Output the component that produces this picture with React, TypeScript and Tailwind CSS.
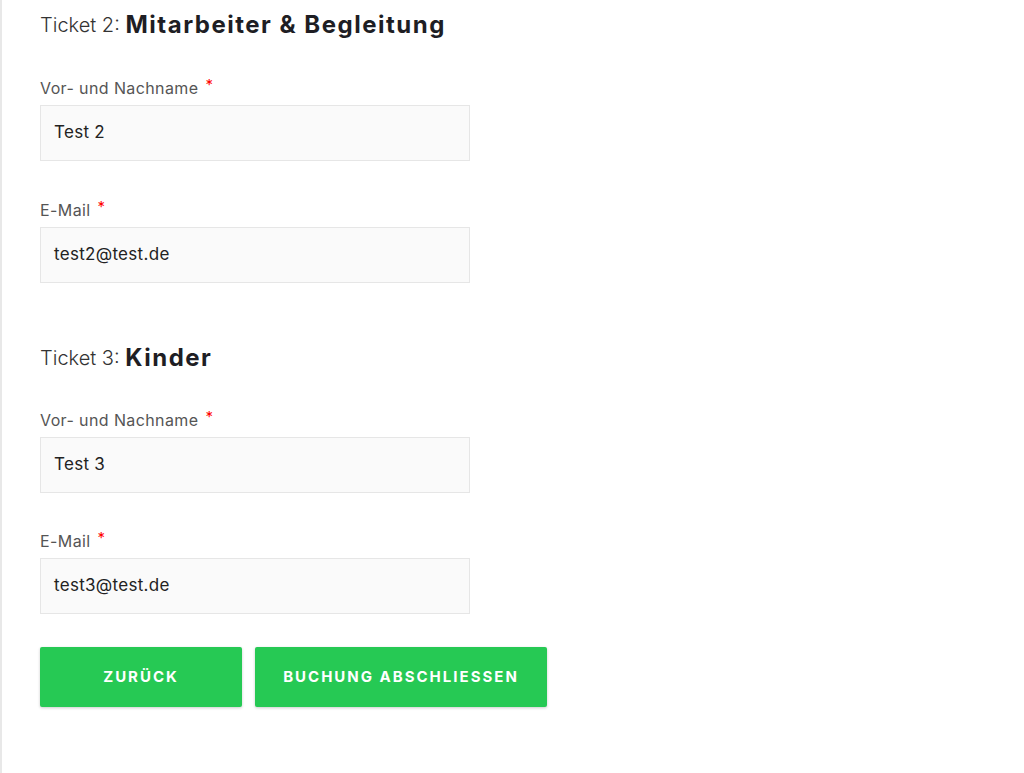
import React from "react";

const font = { fontFamily: "Inter, 'Noto Sans', sans-serif" };

function Field({ label, value, top }: { label: string; value: string; top: string }) {
  return (
    <div className={top}>
      <div className="h-[22px] mb-[6px] flex items-center text-[16px] tracking-[0.4px] text-[#555555]">
        <span>{label}</span>
        <span className="ml-[7px] text-[#ff0000] text-[15px] relative top-[-3px]">*</span>
      </div>
      <div className="w-[430px] h-[56px] bg-[#fafafa] border border-[#e6e6e6] flex items-center px-[13px] text-[17px] tracking-[0.3px] text-[#222222]">
        {value}
      </div>
    </div>
  );
}

export default function App() {
  return (
    <div className="w-[1024px] h-[773px] bg-white" style={font}>
      <div className="h-full border-l-2 border-[#e8e8e8] pl-[38px] pt-[10px]">
        <div className="h-[30px] flex items-center text-[#1e1e24]">
          <span className="text-[20px] font-light text-[#333]">Ticket 2:&nbsp;</span>
          <span className="text-[24px] font-bold tracking-[1.5px]">Mitarbeiter &amp; Begleitung</span>
        </div>
        <Field label="Vor- und Nachname" value="Test 2" top="mt-[37px]" />
        <Field label="E-Mail" value="test2@test.de" top="mt-[38px]" />
        <div className="mt-[60px] h-[30px] flex items-center text-[#1e1e24]">
          <span className="text-[20px] font-light text-[#333]">Ticket 3:&nbsp;</span>
          <span className="text-[24px] font-bold tracking-[1.5px]">Kinder</span>
        </div>
        <Field label="Vor- und Nachname" value="Test 3" top="mt-[36px]" />
        <Field label="E-Mail" value="test3@test.de" top="mt-[37px]" />
        <div className="mt-[33px] flex gap-[13px]">
          <button className="w-[202px] h-[60px] bg-[#26c954] rounded-[2px] text-white text-[15px] font-bold tracking-[2px] shadow-[0_1px_3px_rgba(0,0,0,0.2)]">
            ZURÜCK
          </button>
          <button className="w-[292px] h-[60px] bg-[#26c954] rounded-[2px] text-white text-[15px] font-bold tracking-[2px] shadow-[0_1px_3px_rgba(0,0,0,0.2)]">
            BUCHUNG ABSCHLIESSEN
          </button>
        </div>
      </div>
    </div>
  );
}
